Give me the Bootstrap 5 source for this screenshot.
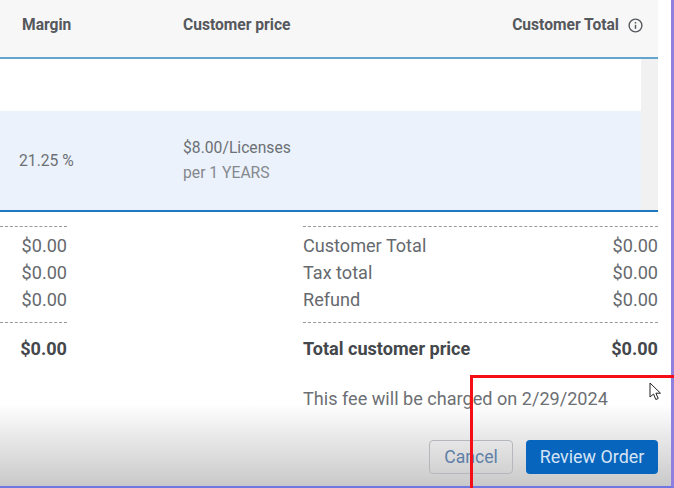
<!DOCTYPE html>
<html lang="en">
<head>
<meta charset="UTF-8">
<meta name="viewport" content="width=device-width, initial-scale=1.0">
<title>Review Order</title>
<link href="https://cdn.jsdelivr.net/npm/bootstrap@5.3.3/dist/css/bootstrap.min.css" rel="stylesheet"/>
<style>
  html, body { height: 100%; overflow: hidden; }
  body { font-family: Roboto, "Liberation Sans", sans-serif; color: #66696e; background: #fff; }
  .frame { width: 674px; height: 488px; position: relative; border-right: 3px solid #8f80e0; border-bottom: 2px solid #6f78e0; padding-right: 13px; }
  .head-row { height: 59px; padding-bottom: 5px; background: #f7f7f7; border-bottom: 2px solid #64a5cf; font-size: 15.6px; font-weight: 700; color: #55585c; }
  .col-margin { width: 183px; padding-left: 22px; flex: none; }
  .col-price { width: 200px; flex: none; }
  .col-total { flex: 1; padding-right: 15px; }
  .info-icon { margin-left: 1px; }
  .body-rows { height: 153px; background: #f1f1f1; border-bottom: 2px solid #1f78c0; }
  .empty-row { height: 52px; background: #fff; margin-right: 17px; }
  .data-row { height: 99px; background: #ebf2fb; margin-right: 17px; font-size: 15.7px; color: #6c7075; }
  .data-row .col-margin { padding-left: 19px; }
  .price-cell { margin-top: -1px; }
  .sub-line { font-size: 15.7px; line-height: 25px; }
  .sub-muted { color: #85888d; }
  .totals { padding-top: 14px; font-size: 18.1px; line-height: 27px; }
  .totals-left { width: 67px; }
  .totals-right { width: 355px; }
  .dash-top { border-top: 1px dashed #9a9a9a; padding-top: 5px; }
  .dash-bottom { border-bottom: 1px dashed #9a9a9a; padding-bottom: 9px; margin-bottom: 12px; }
  .grand { font-weight: 700; color: #44474b; }
  .fee-note { margin-top: 23px; color: #6c6f73; }
  .foot-bar { position: absolute; left: 0; right: 0; bottom: 0; height: 82px; padding: 0 13px 12px 0; background: linear-gradient(rgba(255,255,255,0) 0, #e6e6e6 45%, #c9c9c9 100%); }
  .btn-cancel { width: 84px; height: 34px; padding: 0; margin-right: 5px; font-size: 17.6px; color: #5f7fa8; border: 1px solid #b4b8bc; background: transparent; border-radius: 4px; }
  .btn-review { width: 132px; height: 34px; padding: 0; font-size: 17.9px; color: #d5e4f5; background: #0765bd; border: 0; border-radius: 4px; }
  .red-box { position: absolute; left: 470px; top: 375px; width: 210px; height: 120px; border: 3px solid #f50d18; }
  .pointer { position: absolute; left: 649px; top: 382px; }
</style>
</head>
<body>
<div class="frame">
  <div class="head-row d-flex align-items-center">
    <div class="col-margin">Margin</div>
    <div class="col-price">Customer price</div>
    <div class="col-total d-flex justify-content-end align-items-center gap-2">
      <span>Customer Total</span>
      <svg class="info-icon" width="15" height="15" viewBox="0 0 15 15" fill="none" stroke="#55585c"><circle cx="7.5" cy="7.5" r="6.4" stroke-width="1.4"/><path d="M7.5 6.8v4" stroke-width="1.5"/><path d="M7.5 4v1.5" stroke-width="1.5"/></svg>
    </div>
  </div>
  <div class="body-rows">
    <div class="empty-row"></div>
    <div class="data-row d-flex align-items-center">
      <div class="col-margin">21.25 %</div>
      <div class="col-price price-cell">
        <div class="sub-line">$8.00/Licenses</div>
        <div class="sub-line sub-muted">per 1 YEARS</div>
      </div>
    </div>
  </div>
  <div class="totals d-flex justify-content-between">
    <div class="totals-left text-end">
      <div class="dash-top dash-bottom">
        <div>$0.00</div>
        <div>$0.00</div>
        <div>$0.00</div>
      </div>
      <div class="grand">$0.00</div>
    </div>
    <div class="totals-right">
      <div class="dash-top dash-bottom">
        <div class="d-flex justify-content-between"><span>Customer Total</span><span>$0.00</span></div>
        <div class="d-flex justify-content-between"><span>Tax total</span><span>$0.00</span></div>
        <div class="d-flex justify-content-between"><span>Refund</span><span>$0.00</span></div>
      </div>
      <div class="grand d-flex justify-content-between"><span>Total customer price</span><span>$0.00</span></div>
      <div class="fee-note">This fee will be charged on 2/29/2024</div>
    </div>
  </div>
  <div class="foot-bar d-flex justify-content-end align-items-end gap-2">
    <button type="button" class="btn btn-cancel">Cancel</button>
    <button type="button" class="btn btn-review">Review Order</button>
  </div>
</div>
<div class="red-box"></div>
<svg class="pointer" width="14" height="20" viewBox="0 0 14 20"><path d="M1 1v14l3.5-3 2.3 5.5 2.4-1-2.3-5.3h4.6z" fill="#fff" stroke="#222" stroke-width="1"/></svg>
<script src="https://cdn.jsdelivr.net/npm/bootstrap@5.3.3/dist/js/bootstrap.bundle.min.js"></script>
</body>
</html>
